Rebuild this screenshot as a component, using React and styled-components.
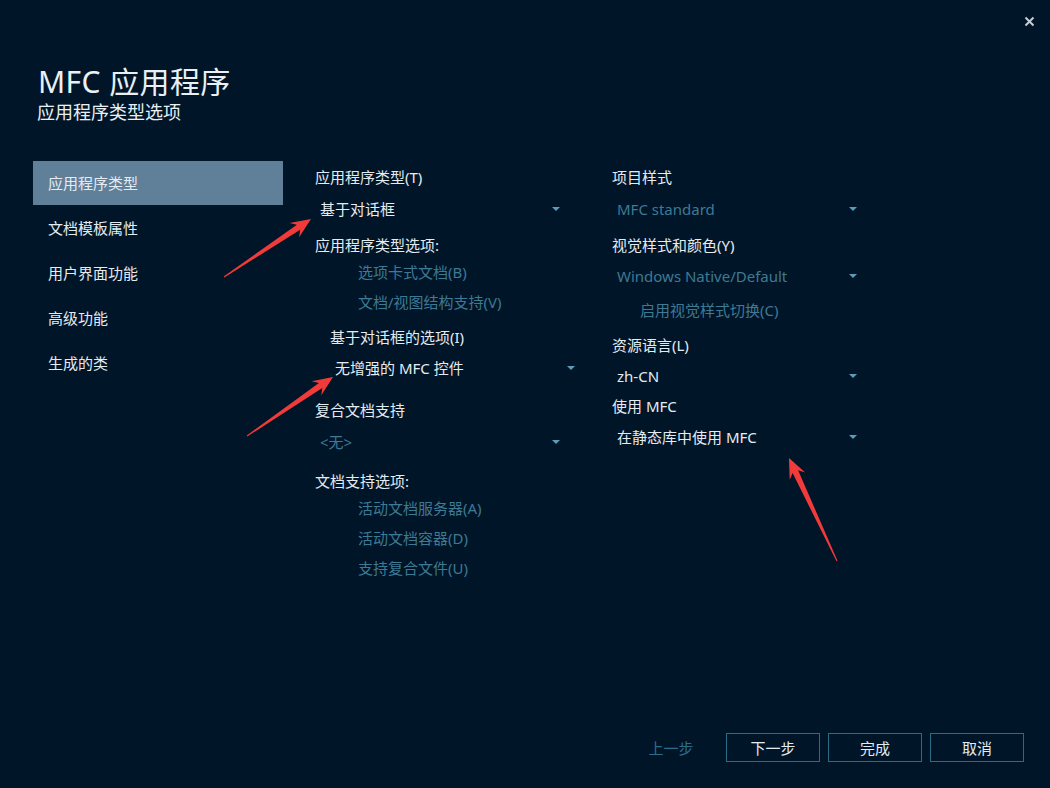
import React from "react";
import styled, { createGlobalStyle } from "styled-components";

const Global = createGlobalStyle`
  html, body { margin: 0; padding: 0; background: #011528; }
  body { font-family: "Noto Sans", "Noto Sans CJK SC", sans-serif; }
  * { box-sizing: border-box; }
`;

const C = {
  bg: "#011528",
  text: "#e4ecf1",
  dim: "#3d7a94",
  tri: "#5d9cb9",
  sel: "#60809a",
  border: "#2a6b88",
};

const Window = styled.div`
  position: relative;
  width: 1050px;
  height: 788px;
  background: ${C.bg};
  color: ${C.text};
  display: flex;
  flex-direction: column;
  overflow: hidden;
`;

const TopBar = styled.div`
  height: 42px;
  display: flex;
  justify-content: flex-end;
  align-items: center;
  padding-right: 15px;
`;

const Close = styled.div`
  width: 11px;
  height: 11px;
  display: flex;
  align-items: center;
  justify-content: center;
  margin-top: 1px;
`;

const Header = styled.div`
  padding-left: 37px;
  display: flex;
  flex-direction: column;
`;

const Title = styled.div`
  font-size: 30px;
  line-height: 36px;
  margin-top: 22px;
  padding-left: 1px;
  letter-spacing: 0.4px;
  color: #e8f0f4;
`;

const Subtitle = styled.div`
  font-size: 18px;
  line-height: 24px;
  color: #e8f0f4;
`;

const Body = styled.div`
  flex: 1;
  display: flex;
  margin-top: 37px;
  padding-left: 33px;
`;

const Sidebar = styled.div`
  width: 250px;
  display: flex;
  flex-direction: column;
  gap: 1px;
`;

const NavItem = styled.div`
  height: 44px;
  padding-left: 15px;
  padding-bottom: 1px;
  display: flex;
  align-items: center;
  font-size: 15px;
  background: ${(p) => (p.$active ? C.sel : "transparent")};
  color: ${C.text};
`;

const Columns = styled.div`
  display: grid;
  grid-template-columns: 297px 260px;
  margin-left: 32px;
  padding-top: 6px;
`;

const Column = styled.div`
  display: flex;
  flex-direction: column;
`;

const Line = styled.div`
  height: 20px;
  line-height: 20px;
  font-size: 15px;
  white-space: nowrap;
  margin-top: ${(p) => p.$mt || 0}px;
  margin-left: ${(p) => p.$indent || 0}px;
  color: ${(p) => (p.$dim ? C.dim : C.text)};
`;

const Select = styled.div`
  width: 248px;
  height: 20px;
  line-height: 20px;
  font-size: 15px;
  display: flex;
  align-items: center;
  justify-content: space-between;
  padding: 0 3px 0 5px;
  margin-top: ${(p) => p.$mt || 0}px;
  margin-left: ${(p) => p.$indent || 0}px;
  color: ${(p) => (p.$dim ? C.dim : C.text)};
`;

const Tri = styled.span`
  width: 0;
  height: 0;
  border-left: 4px solid transparent;
  border-right: 4px solid transparent;
  border-top: 4px solid ${C.tri};
  margin-top: -1px;
`;

const Footer = styled.div`
  display: flex;
  justify-content: flex-end;
  gap: 8px;
  padding: 0 26px 26px 0;
`;

const Button = styled.div`
  width: 94px;
  height: 29px;
  display: flex;
  align-items: center;
  justify-content: center;
  font-size: 15px;
  border: 1px solid ${(p) => (p.$plain ? "transparent" : C.border)};
  color: ${(p) => (p.$plain ? "#2c6e89" : C.text)};
`;

const Overlay = styled.svg`
  position: absolute;
  left: 0;
  top: 0;
  pointer-events: none;
`;

function arrowPoints(x1, y1, x2, y2) {
  const dx = x2 - x1, dy = y2 - y1;
  const len = Math.hypot(dx, dy);
  const ux = dx / len, uy = dy / len;
  const px = -uy, py = ux;
  const headL = 20, headW = 8.5, neckW = 3, neckD = 15;
  const at = (d, w) => [x1 + ux * d + px * w, y1 + uy * d + py * w];
  const pts = [
    at(0, 0.6),
    at(len - neckD, neckW),
    at(len - headL, headW),
    [x2, y2],
    at(len - headL, -headW),
    at(len - neckD, -neckW),
    at(0, -0.6),
  ];
  return pts.map((p) => p.map((v) => v.toFixed(1)).join(",")).join(" ");
}

const Select2 = ({ children, ...rest }) => (
  <Select {...rest}>
    <span>{children}</span>
    <Tri />
  </Select>
);

export default function App() {
  const nav = ["应用程序类型", "文档模板属性", "用户界面功能", "高级功能", "生成的类"];
  return (
    <>
      <Global />
      <Window>
        <TopBar>
          <Close>
            <svg width="11" height="11" viewBox="0 0 11 11">
              <path d="M1.5 1.5 L9.5 9.5 M9.5 1.5 L1.5 9.5" stroke="#c9cdd1" strokeWidth="2" />
            </svg>
          </Close>
        </TopBar>
        <Header>
          <Title>MFC 应用程序</Title>
          <Subtitle>应用程序类型选项</Subtitle>
        </Header>
        <Body>
          <Sidebar>
            {nav.map((n, i) => (
              <NavItem key={n} $active={i === 0}>
                {n}
              </NavItem>
            ))}
          </Sidebar>
          <Columns>
            <Column>
              <Line>应用程序类型(T)</Line>
              <Select2 $mt={12}>基于对话框</Select2>
              <Line $mt={16}>应用程序类型选项:</Line>
              <Line $mt={7} $indent={43} $dim>选项卡式文档(B)</Line>
              <Line $mt={10} $indent={43} $dim>文档/视图结构支持(V)</Line>
              <Line $mt={15} $indent={15}>基于对话框的选项(I)</Line>
              <Select2 $mt={11} $indent={15}>无增强的 MFC 控件</Select2>
              <Line $mt={22}>复合文档支持</Line>
              <Select2 $mt={12} $dim>&lt;无&gt;</Select2>
              <Line $mt={19}>文档支持选项:</Line>
              <Line $mt={7} $indent={43} $dim>活动文档服务器(A)</Line>
              <Line $mt={10} $indent={43} $dim>活动文档容器(D)</Line>
              <Line $mt={10} $indent={43} $dim>支持复合文件(U)</Line>
            </Column>
            <Column>
              <Line>项目样式</Line>
              <Select2 $mt={12} $dim>MFC standard</Select2>
              <Line $mt={16}>视觉样式和颜色(Y)</Line>
              <Select2 $mt={11} $dim>Windows Native/Default</Select2>
              <Line $mt={14} $indent={28} $dim>启用视觉样式切换(C)</Line>
              <Line $mt={15}>资源语言(L)</Line>
              <Select2 $mt={11}>zh-CN</Select2>
              <Line $mt={10}>使用 MFC</Line>
              <Select2 $mt={11}>在静态库中使用 MFC</Select2>
            </Column>
          </Columns>
        </Body>
        <Footer>
          <Button $plain>上一步</Button>
          <Button>下一步</Button>
          <Button>完成</Button>
          <Button>取消</Button>
        </Footer>
        <Overlay width="1050" height="788" viewBox="0 0 1050 788">
          <g fill="#f13b3b">
            <polygon points={arrowPoints(224, 277, 311, 219)} />
            <polygon points={arrowPoints(247, 436, 333, 377)} />
            <polygon points={arrowPoints(837, 561, 789, 458)} />
          </g>
        </Overlay>
      </Window>
    </>
  );
}
